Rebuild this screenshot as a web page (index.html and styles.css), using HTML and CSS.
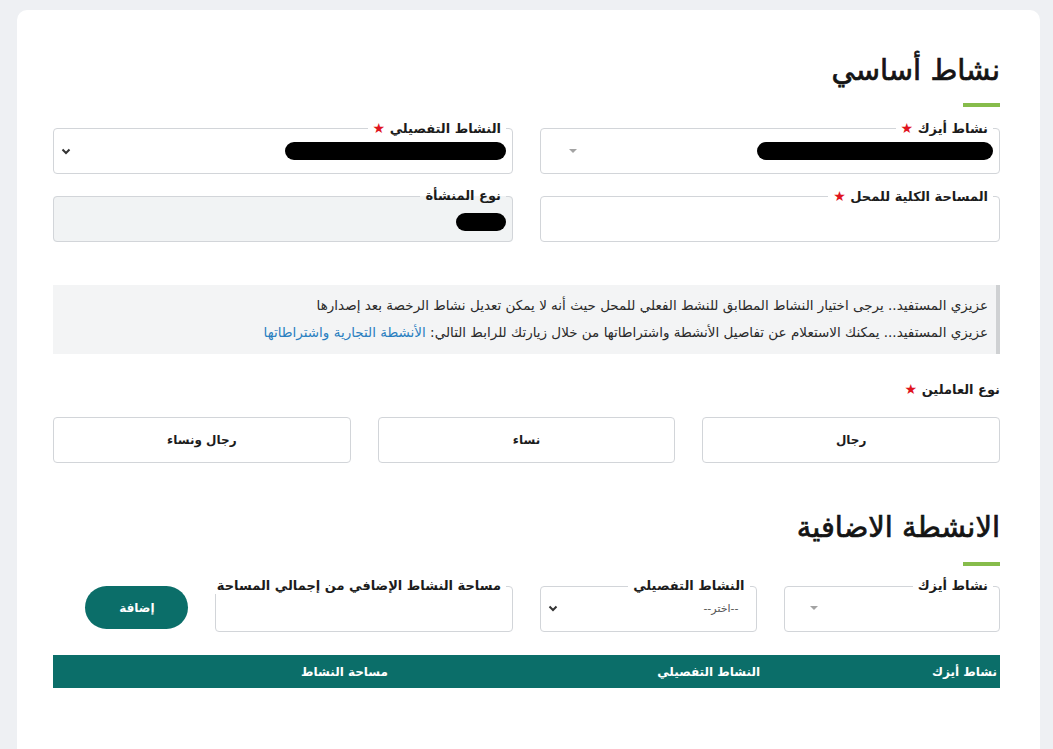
FILE: index.html
```html
<!DOCTYPE html>
<html lang="ar" dir="rtl">
<head>
<meta charset="utf-8">
<title>نشاط أساسي</title>
<link rel="stylesheet" href="styles.css">
</head>
<body>
<div class="page">
  <main class="card">
    <section class="section">
      <h2 class="title">نشاط أساسي</h2>
      <div class="title-bar"></div>

      <div class="grid grid-fields">
        <fieldset class="field col-6">
          <legend>نشاط أيزك <span class="req">★</span></legend>
          <div class="control select">
            <span class="redact redact-a"></span>
            <span class="tri"></span>
          </div>
        </fieldset>
        <fieldset class="field col-6">
          <legend>النشاط التفصيلي <span class="req">★</span></legend>
          <div class="control select">
            <span class="redact redact-b"></span>
            <svg class="chev" width="10" height="7" viewBox="0 0 10 7"><path d="M1.5 1.5 L5 5 L8.5 1.5" fill="none" stroke="#333" stroke-width="2"/></svg>
          </div>
        </fieldset>
        <fieldset class="field col-6">
          <legend>المساحة الكلية للمحل <span class="req">★</span></legend>
          <div class="control input"></div>
        </fieldset>
        <fieldset class="field col-6 disabled">
          <legend>نوع المنشأة</legend>
          <div class="control input">
            <span class="redact redact-c"></span>
          </div>
        </fieldset>
      </div>

      <div class="info">
        <p>عزيزي المستفيد.. يرجى اختيار النشاط المطابق للنشط الفعلي للمحل حيث أنه لا يمكن تعديل نشاط الرخصة بعد إصدارها</p>
        <p>عزيزي المستفيد... يمكنك الاستعلام عن تفاصيل الأنشطة واشتراطاتها من خلال زيارتك للرابط التالي: <a href="#" class="link">الأنشطة التجارية واشتراطاتها</a></p>
      </div>

      <div class="group-label">نوع العاملين <span class="req">★</span></div>
      <div class="grid choices">
        <button class="choice col-4" type="button">رجال</button>
        <button class="choice col-4" type="button">نساء</button>
        <button class="choice col-4" type="button">رجال ونساء</button>
      </div>
    </section>

    <section class="section section-extra">
      <h2 class="title">الانشطة الاضافية</h2>
      <div class="title-bar"></div>

      <div class="grid grid-fields">
        <fieldset class="field col-3">
          <legend>نشاط أيزك</legend>
          <div class="control select">
            <span></span>
            <span class="tri tri-2"></span>
          </div>
        </fieldset>
        <fieldset class="field col-3">
          <legend>النشاط التفصيلي</legend>
          <div class="control select">
            <span class="placeholder">--اختر--</span>
            <svg class="chev" width="10" height="7" viewBox="0 0 10 7"><path d="M1.5 1.5 L5 5 L8.5 1.5" fill="none" stroke="#333" stroke-width="2"/></svg>
          </div>
        </fieldset>
        <fieldset class="field col-4">
          <legend>مساحة النشاط الإضافي من إجمالي المساحة</legend>
          <div class="control input"></div>
        </fieldset>
        <div class="col-2 add-cell">
          <button class="btn-add" type="button">إضافة</button>
        </div>
      </div>

      <table class="table">
        <thead>
          <tr>
            <th class="c1">نشاط أيزك</th>
            <th class="c2">النشاط التفصيلي</th>
            <th class="c3">مساحة النشاط</th>
          </tr>
        </thead>
        <tbody></tbody>
      </table>
    </section>
  </main>
</div>
</body>
</html>
```
FILE: styles.css
```css
* { box-sizing: border-box; }

html, body {
  margin: 0;
  padding: 0;
}

body {
  background: #eef0f3;
  font-family: "DejaVu Sans", "Noto Sans", sans-serif;
  color: #1c1c1c;
  direction: rtl;
}

.page {
  padding: 10px 13px 0 17px;
}

.card {
  background: #ffffff;
  border-radius: 10px;
  padding: 40px 40px 60px 36px;
  min-height: 760px;
}

.title {
  margin: 0;
  font-size: 29px;
  line-height: 40px;
  font-weight: 400;
  color: #141414;
  -webkit-text-stroke: 0.7px #141414;
}

.title-bar {
  width: 37px;
  height: 4px;
  background: #86bc4b;
  margin-top: 13px;
}

.grid {
  display: grid;
  grid-template-columns: repeat(12, 1fr);
  column-gap: 27px;
}

.grid-fields {
  row-gap: 14px;
  margin-top: 13px;
}

.col-2 { grid-column: span 2; }
.col-3 { grid-column: span 3; }
.col-4 { grid-column: span 4; }
.col-6 { grid-column: span 6; }

.field {
  margin: 0;
  min-width: 0;
  border: 1px solid #d2d5d9;
  border-radius: 4px;
  padding: 0 6px 2px;
  height: 54px;
  background: #fff;
}

.field.disabled {
  background: #f1f3f4;
}

.field legend {
  padding: 0 5px;
  font-size: 13px;
  line-height: 16px;
  font-weight: 700;
  color: #1c1c1c;
  white-space: nowrap;
}

.req {
  color: #e0141e;
  font-size: 14px;
}

.control {
  display: flex;
  align-items: center;
  justify-content: space-between;
}

.control.select { height: 28px; }
.control.input { height: 36px; }

.redact {
  display: block;
  height: 18px;
  background: #000;
  border-radius: 9px;
}

.redact-a { width: 236px; }
.redact-b { width: 221px; }
.redact-c { width: 50px; }

.tri {
  width: 0;
  height: 0;
  border-left: 4px solid transparent;
  border-right: 4px solid transparent;
  border-top: 4px solid #a3a3a3;
  margin-left: 22px;
}

.tri-2 { margin-left: 19px; }

.chev {
  display: block;
  margin-left: 1px;
}

.placeholder {
  font-size: 11px;
  color: #555;
  margin-right: 11px;
}

.info {
  margin-top: 43px;
  background: #f3f4f5;
  border-right: 4px solid #cfd1d3;
  padding: 7px 8px 8px;
}

.info p {
  margin: 0;
  font-size: 13.5px;
  line-height: 27px;
  color: #2a2a2a;
}

.link {
  color: #2a7fc0;
  text-decoration: none;
}

.group-label {
  margin-top: 25px;
  font-size: 13px;
  line-height: 20px;
  font-weight: 700;
  color: #1c1c1c;
}

.choices {
  margin-top: 17px;
}

.choice {
  height: 46px;
  border: 1px solid #d2d5d9;
  border-radius: 4px;
  background: #fff;
  font-family: inherit;
  font-size: 12px;
  font-weight: 700;
  color: #1c1c1c;
  padding: 0;
}

.section-extra {
  margin-top: 44px;
}

.section-extra .title-bar {
  margin-top: 15px;
}

.section-extra .grid-fields {
  margin-top: 12px;
}

.add-cell {
  display: flex;
  align-items: flex-start;
}

.btn-add {
  margin-top: 8px;
  width: 103px;
  height: 43px;
  border: none;
  border-radius: 22px;
  background: #0b6e69;
  color: #fff;
  font-family: inherit;
  font-size: 12px;
  font-weight: 700;
}

.table {
  margin-top: 23px;
  width: 100%;
  border-collapse: collapse;
}

.table th {
  background: #0b6e69;
  color: #fff;
  height: 33px;
  padding: 0;
  text-align: right;
  font-size: 12px;
  font-weight: 700;
}

.table .c1 { width: 240px; padding-right: 3px; }
.table .c2 { width: 372px; }
```
